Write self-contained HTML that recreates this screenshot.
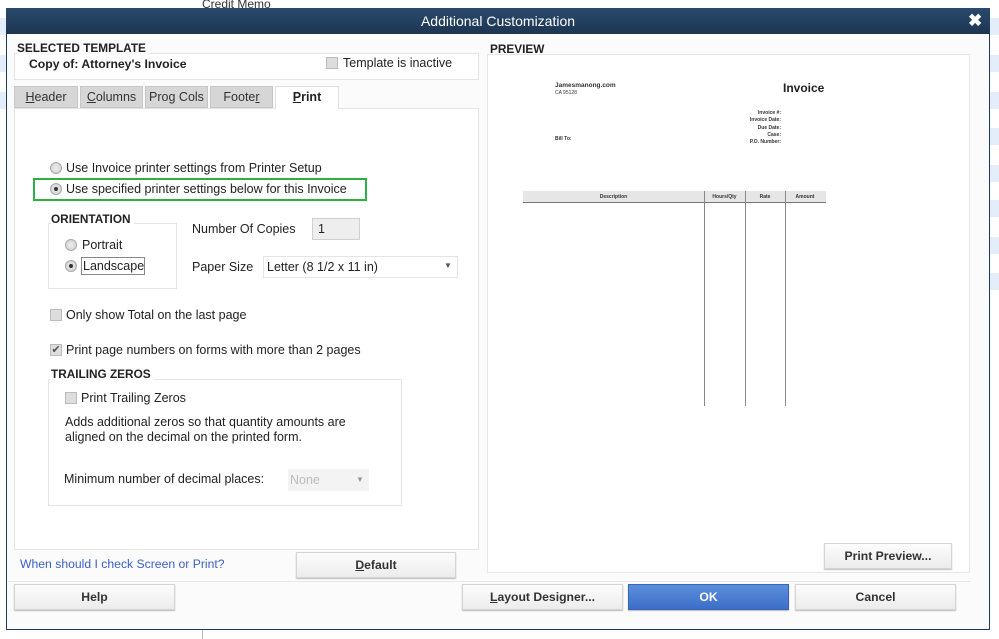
<!DOCTYPE html>
<html><head><style>
*{margin:0;padding:0;box-sizing:border-box}
body{width:999px;height:639px;position:relative;overflow:hidden;background:#fff;font-family:"Liberation Sans",Arial,sans-serif;font-size:12.5px;color:#222}
.a{position:absolute}
.t{font-size:12.5px}
.stripe{position:absolute;height:17px;background:#e4eefa}
.btn{position:absolute;background:linear-gradient(#fcfcfc,#ececec);border:1px solid #d4d4d4;box-shadow:0 1px 1px #bbb;text-align:center;font-weight:bold;color:#333;font-size:12.2px}
.rad{position:absolute;width:12px;height:12px;border-radius:50%;border:1px solid #aaa;background:radial-gradient(#eee,#ccc)}
.rad.on::after{content:"";position:absolute;left:3px;top:3px;width:4px;height:4px;border-radius:50%;background:#333}
.chk{position:absolute;width:12px;height:12px;border:1px solid #bbb;background:#ddd}
.grp{position:absolute;border:1px solid #e4e4e4;background:#fff}
.lbl{position:absolute;font-weight:bold;font-size:11.8px;color:#222;background:#fbfbfb;padding-right:4px}
.tab{position:absolute;top:86px;height:22px;background:#d6d6d6;border:1px solid #c6c6c6;text-align:center;line-height:21px;color:#333;font-size:12.5px}
.pv{position:absolute;font-size:5px;font-weight:bold;color:#333}
</style></head><body>
<div class="a" style="left:202px;top:-3px;font-size:12px;color:#333">Credit Memo</div>
<div class="a" style="left:202px;top:630px;width:1px;height:9px;background:#bbb"></div>
<div class="stripe" style="left:990px;top:18px;width:9px"></div>
<div class="stripe" style="left:990px;top:55px;width:9px"></div>
<div class="stripe" style="left:990px;top:92px;width:9px"></div>
<div class="stripe" style="left:990px;top:128px;width:9px"></div>
<div class="stripe" style="left:990px;top:165px;width:9px"></div>
<div class="stripe" style="left:990px;top:200px;width:9px"></div>
<div class="stripe" style="left:990px;top:237px;width:9px"></div>
<div class="stripe" style="left:990px;top:273px;width:9px"></div>
<div class="stripe" style="left:0;top:18px;width:6px"></div>
<div class="stripe" style="left:0;top:55px;width:6px"></div>
<div class="stripe" style="left:0;top:92px;width:6px"></div>

<div class="a" style="left:6px;top:8px;width:984px;height:622px;background:#fbfbfb;border:1px solid #1f3b5a;border-top:none"></div>
<div class="a" style="left:6px;top:8px;width:984px;height:26px;background:linear-gradient(#2a4a6c,#1c3553);color:#fff;font-size:14px;text-align:center;line-height:26px">Additional Customization</div>
<div class="a" style="left:968px;top:11px;color:#fff;font-size:17px;font-weight:bold">✖</div>

<div class="grp" style="left:14px;top:53px;width:465px;height:27px"></div>
<div class="lbl" style="left:17px;top:41px">SELECTED TEMPLATE</div>
<div class="a" style="left:29px;top:57px;font-weight:bold;font-size:12.2px">Copy of: Attorney's Invoice</div>
<div class="chk" style="left:326px;top:57px"></div>
<div class="a t" style="left:343px;top:56px">Template is inactive</div>

<div class="tab" style="left:14px;width:64px"><u>H</u>eader</div>
<div class="tab" style="left:80px;width:63px"><u>C</u>olumns</div>
<div class="tab" style="left:145px;width:63px">Prog Cols</div>
<div class="tab" style="left:210px;width:63px">Foote<u>r</u></div>
<div class="grp" style="left:14px;top:108px;width:465px;height:442px"></div>
<div class="a" style="left:275px;top:86px;width:64px;height:23px;background:#fff;border:1px solid #e0e0e0;border-bottom:none;text-align:center;line-height:21px;font-weight:bold;font-size:12.5px"><u>P</u>rint</div>

<div class="rad" style="left:50px;top:162px"></div>
<div class="a t" style="left:66px;top:161px">Use Invoice printer settings from Printer Setup</div>
<div class="a" style="left:33px;top:178px;width:334px;height:23px;border:2px solid #2bb042"></div>
<div class="rad on" style="left:50px;top:183px"></div>
<div class="a t" style="left:66px;top:182px">Use specified printer settings below for this Invoice</div>

<div class="grp" style="left:48px;top:223px;width:129px;height:66px"></div>
<div class="a" style="left:51px;top:212px;font-weight:bold;font-size:11.8px;background:#fff;padding-right:3px">ORIENTATION</div>
<div class="rad" style="left:65px;top:239px"></div>
<div class="a t" style="left:82px;top:238px">Portrait</div>
<div class="rad on" style="left:65px;top:260px"></div>
<div class="a t" style="left:81px;top:257px;border:1px solid #888;padding:1px 0 1px 1px">Landscape</div>
<div class="a t" style="left:192px;top:222px">Number Of Copies</div>
<div class="a t" style="left:312px;top:218px;width:48px;height:22px;background:#eee;border:1px solid #d0d0d0;padding:3px 5px">1</div>
<div class="a t" style="left:192px;top:260px">Paper Size</div>
<div class="a t" style="left:263px;top:256px;width:195px;height:22px;background:#fff;border:1px solid #e4e4e4;padding:3px 3px">Letter (8 1/2 x 11 in)</div>
<div class="a" style="left:444px;top:261px;font-size:8px;color:#555">▼</div>

<div class="chk" style="left:50px;top:309px"></div>
<div class="a t" style="left:66px;top:308px">Only show Total on the last page</div>
<div class="chk" style="left:50px;top:344px;font-size:11px;line-height:10px;color:#555;text-align:center">✔</div>
<div class="a t" style="left:66px;top:343px">Print page numbers on forms with more than 2 pages</div>

<div class="grp" style="left:48px;top:379px;width:354px;height:127px"></div>
<div class="a" style="left:51px;top:367px;font-weight:bold;font-size:11.8px;background:#fff;padding-right:3px">TRAILING ZEROS</div>
<div class="chk" style="left:65px;top:392px"></div>
<div class="a t" style="left:81px;top:391px">Print Trailing Zeros</div>
<div class="a t" style="left:65px;top:415px;line-height:15px">Adds additional zeros so that quantity amounts are<br>aligned on the decimal on the printed form.</div>
<div class="a t" style="left:64px;top:472px">Minimum number of decimal places:</div>
<div class="a t" style="left:288px;top:469px;width:81px;height:22px;background:#f3f3f3;padding:4px 2px;color:#bbb">None</div>
<div class="a" style="left:356px;top:475px;font-size:8px;color:#999">▼</div>

<div class="a" style="left:20px;top:557px;font-size:12.2px;color:#3a5fc8">When should I check Screen or Print?</div>
<div class="btn" style="left:296px;top:552px;width:160px;height:26px;line-height:25px"><u>D</u>efault</div>

<div class="a" style="left:490px;top:42px;font-weight:bold;font-size:11.8px">PREVIEW</div>
<div class="grp" style="left:487px;top:54px;width:483px;height:519px;border-color:#e6e6e6"></div>
<div class="pv" style="left:555px;top:82px;font-size:6.5px">Jamesmanong.com</div>
<div class="pv" style="left:555px;top:90px;font-weight:normal">CA 95128</div>
<div class="a" style="left:783px;top:81px;font-weight:bold;font-size:12px">Invoice</div>
<div class="pv" style="left:700px;top:110px;width:81px;text-align:right;line-height:7.3px">Invoice #:<br>Invoice Date:<br>Due Date:<br>Case:<br>P.O. Number:</div>
<div class="pv" style="left:555px;top:136px">Bill To:</div>
<div class="a" style="left:523px;top:191px;width:303px;height:12px;background:#e6e6e6;border-bottom:1px solid #777"></div>
<div class="pv" style="left:523px;top:194px;width:181px;text-align:center">Description</div>
<div class="pv" style="left:704px;top:194px;width:41px;text-align:center">Hours/Qty</div>
<div class="pv" style="left:745px;top:194px;width:40px;text-align:center">Rate</div>
<div class="pv" style="left:785px;top:194px;width:40px;text-align:center">Amount</div>
<div class="a" style="left:704px;top:191px;width:1px;height:215px;background:#888"></div>
<div class="a" style="left:745px;top:191px;width:1px;height:215px;background:#888"></div>
<div class="a" style="left:785px;top:191px;width:1px;height:215px;background:#888"></div>
<div class="btn" style="left:824px;top:543px;width:128px;height:26px;line-height:25px">Print Preview...</div>

<div class="a" style="left:8px;top:581px;width:963px;height:1px;background:#e6e6e6"></div>
<div class="btn" style="left:14px;top:584px;width:161px;height:26px;line-height:25px">Help</div>
<div class="btn" style="left:462px;top:584px;width:161px;height:26px;line-height:25px"><u>L</u>ayout Designer...</div>
<div class="btn" style="left:628px;top:584px;width:161px;height:26px;line-height:25px;background:linear-gradient(#5b8fdc,#3c6ec8);border-color:#3a66b8;color:#fff">OK</div>
<div class="btn" style="left:795px;top:584px;width:161px;height:26px;line-height:25px">Cancel</div>
</body></html>
